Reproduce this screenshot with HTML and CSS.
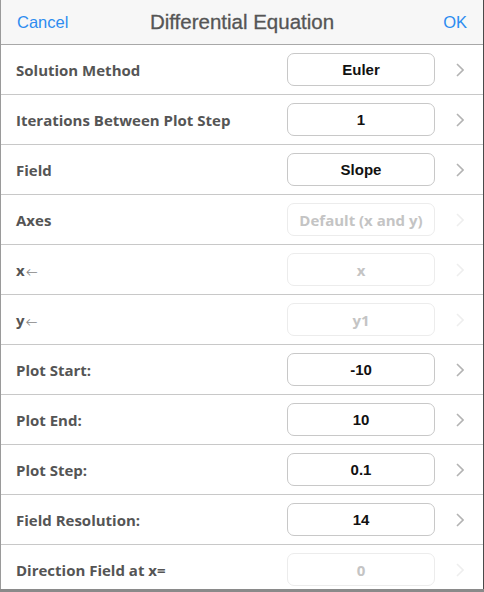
FILE: index.html
```html
<!DOCTYPE html>
<html>
<head>
<meta charset="utf-8">
<link rel="stylesheet" href="styles.css">
</head>
<body>
<div class="panel">
  <header class="bar">
    <span class="btn">Cancel</span>
    <span class="title">Differential Equation</span>
    <span class="btn ok">OK</span>
  </header>
  <div class="row"><span class="label">Solution Method</span><span class="box">Euler</span><svg class="chev" viewBox="0 0 8 14"><path d="M1 1 L7 7 L1 13"/></svg></div>
  <div class="row"><span class="label">Iterations Between Plot Step</span><span class="box">1</span><svg class="chev" viewBox="0 0 8 14"><path d="M1 1 L7 7 L1 13"/></svg></div>
  <div class="row"><span class="label">Field</span><span class="box">Slope</span><svg class="chev" viewBox="0 0 8 14"><path d="M1 1 L7 7 L1 13"/></svg></div>
  <div class="row off"><span class="label">Axes</span><span class="box">Default (x and y)</span><svg class="chev" viewBox="0 0 8 14"><path d="M1 1 L7 7 L1 13"/></svg></div>
  <div class="row off"><span class="label">x<span class="arr">←</span></span><span class="box">x</span><svg class="chev" viewBox="0 0 8 14"><path d="M1 1 L7 7 L1 13"/></svg></div>
  <div class="row off"><span class="label">y<span class="arr">←</span></span><span class="box">y1</span><svg class="chev" viewBox="0 0 8 14"><path d="M1 1 L7 7 L1 13"/></svg></div>
  <div class="row"><span class="label">Plot Start:</span><span class="box">-10</span><svg class="chev" viewBox="0 0 8 14"><path d="M1 1 L7 7 L1 13"/></svg></div>
  <div class="row"><span class="label">Plot End:</span><span class="box">10</span><svg class="chev" viewBox="0 0 8 14"><path d="M1 1 L7 7 L1 13"/></svg></div>
  <div class="row"><span class="label">Plot Step:</span><span class="box">0.1</span><svg class="chev" viewBox="0 0 8 14"><path d="M1 1 L7 7 L1 13"/></svg></div>
  <div class="row"><span class="label">Field Resolution:</span><span class="box">14</span><svg class="chev" viewBox="0 0 8 14"><path d="M1 1 L7 7 L1 13"/></svg></div>
  <div class="row off last"><span class="label">Direction Field at x=</span><span class="box">0</span><svg class="chev" viewBox="0 0 8 14"><path d="M1 1 L7 7 L1 13"/></svg></div>
</div>
</body>
</html>
```
FILE: styles.css
```css
html, body { margin: 0; padding: 0; background: #8a8a8a; }
.panel {
  width: 482px;
  height: 589px;
  background: #fff;
  border-left: 1px solid #9a9a9a;
  border-right: 1px solid #4a4a4a;
  overflow: hidden;
}
.bar {
  height: 44px;
  background: #f7f7f7;
  border-bottom: 1px solid #a8a8a8;
  display: grid;
  grid-template-columns: 1fr auto 1fr;
  align-items: center;
  padding: 0 16px 0 16px;
  font-family: "Liberation Sans", Arial, sans-serif;
}
.btn { color: #2d8cf0; font-size: 16.5px; }
.btn.ok { justify-self: end; }
.title { color: #555; font-size: 20.5px; -webkit-text-stroke: 0.3px #555; }
.row {
  height: 49px;
  border-bottom: 1px solid #c8c8c8;
  display: flex;
  align-items: center;
  padding-left: 15px;
}
.row.last { border-bottom: none; }
.label {
  flex: 1;
  font-family: "Open Sans", Lato, sans-serif;
  font-weight: 700;
  font-size: 15px;
  color: #555;
}
.arr { font-weight: 400; font-size: 12px; color: #888; margin-left: 1px; }
.box {
  width: 146px;
  height: 31px;
  border: 1px solid #c8c8c8;
  border-radius: 7px;
  display: flex;
  align-items: center;
  justify-content: center;
  font-family: "Liberation Sans", Arial, sans-serif;
  font-weight: 700;
  font-size: 15px;
  color: #111;
  margin-right: 21px;
}
.chev {
  width: 8px;
  height: 14px;
  margin-right: 19px;
  fill: none;
  stroke: #b3b3b3;
  stroke-width: 1.6;
}
.off .box {
  border-color: #ececec;
  color: #c4c4c4;
  font-family: "Open Sans", Lato, sans-serif;
  font-size: 15px;
}
.off .chev { stroke: #eeeeee; }
```
